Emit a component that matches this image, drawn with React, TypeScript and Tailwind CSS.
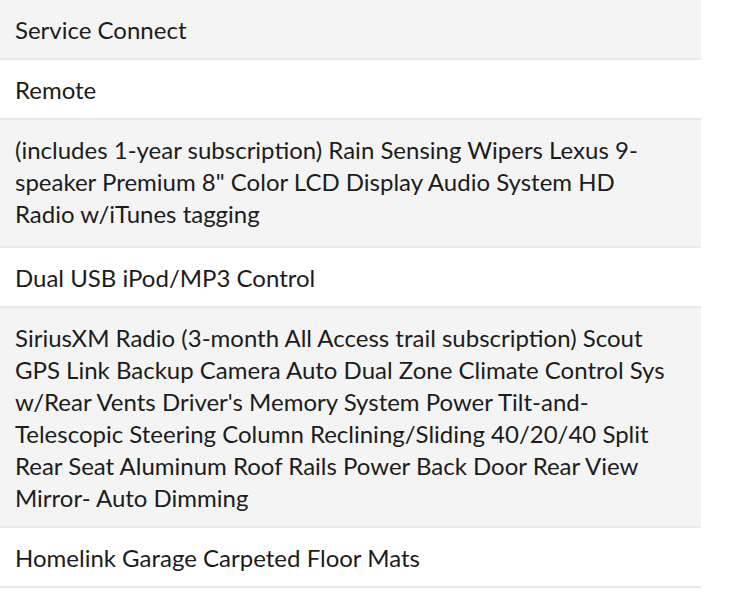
const features = [
  "Service Connect",
  "Remote",
  "(includes 1-year subscription) Rain Sensing Wipers Lexus 9-speaker Premium 8\" Color LCD Display Audio System HD Radio w/iTunes tagging",
  "Dual USB iPod/MP3 Control",
  "SiriusXM Radio (3-month All Access trail subscription) Scout GPS Link Backup Camera Auto Dual Zone Climate Control Sys w/Rear Vents Driver's Memory System Power Tilt-and-Telescopic Steering Column Reclining/Sliding 40/20/40 Split Rear Seat Aluminum Roof Rails Power Back Door Rear View Mirror- Auto Dimming",
  "Homelink Garage Carpeted Floor Mats",
];

export default function App() {
  return (
    <div className="min-h-screen bg-white">
      <ul className="w-[701px]" style={{ fontFamily: "Lato, 'Noto Sans', sans-serif" }}>
        {features.map((item, index) => (
          <li
            key={index}
            className={
              "pl-[15px] pr-[26px] pt-[14px] border-b-2 border-[#e8e8e8] text-[24px] leading-[32px] text-[#1c1c1c] " +
              (index % 2 === 0 ? "bg-[#f4f4f4] " : "bg-white ") +
              (index === 2 ? "pb-[16px]" : "pb-[12px]")
            }
          >
            {item}
          </li>
        ))}
      </ul>
    </div>
  );
}
